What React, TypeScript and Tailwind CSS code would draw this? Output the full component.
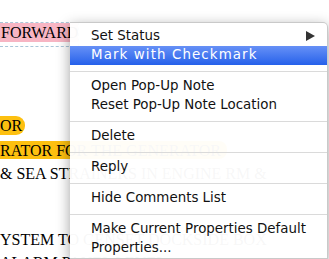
import type { ReactNode } from "react";

type MenuEntry = { label: string; arrow?: boolean; active?: boolean };

const menu: MenuEntry[][] = [
  [{ label: "Set Status", arrow: true }, { label: "Mark with Checkmark", active: true }],
  [{ label: "Open Pop-Up Note" }, { label: "Reset Pop-Up Note Location" }],
  [{ label: "Delete" }],
  [{ label: "Reply" }],
  [{ label: "Hide Comments List" }],
  [{ label: "Make Current Properties Default" }, { label: "Properties..." }],
];

function DocLine({ className, children }: { className: string; children: ReactNode }) {
  return <div className={`whitespace-nowrap text-[16px] leading-[19px] text-black ${className}`}>{children}</div>;
}

function MenuRow({ label, arrow, active }: MenuEntry) {
  return (
    <div
      className={`flex h-[19px] items-center justify-between pl-[21px] pr-[12px] ${
        active ? "bg-linear-to-b from-[#6690f6] to-[#2560ea] tracking-[1.1px] text-white" : "text-[#111]"
      }`}
    >
      <span>{label}</span>
      {arrow && (
        <svg width="9" height="10" viewBox="0 0 9 10" className="mt-[-1px]">
          <path d="M0 0 L9 5 L0 10 Z" fill="#333" />
        </svg>
      )}
    </div>
  );
}

export default function App() {
  return (
    <div className="relative h-[259px] w-[329px] overflow-hidden bg-white" style={{ fontFamily: "'Liberation Serif', serif" }}>
      {/* document underneath */}
      <div className="pt-[22px]">
        <div className="h-[25px] w-[79px] border border-dashed border-[#a9c6d8] border-l-0">
          <DocLine className="h-[19px] bg-[#f7b5c3] pl-[1px]">FORWARD</DocLine>
        </div>
        <DocLine className="mt-[69px]">
          <span className="inline-block h-[19px] rounded-r-[9px] bg-[#fdc010] pr-[3px]">OR</span>
        </DocLine>
        <DocLine className="mt-[6px]">
          <span className="inline-block h-[18px] rounded-r-[8px] bg-[#fdc010] pr-[6px]">RATOR FOR THE GENERATOR</span>
        </DocLine>
        <DocLine className="mt-[4px]">&amp; SEA STRAINERS IN ENGINE RM &amp;</DocLine>
        <DocLine className="mt-[47px]">YSTEM TO GENSET DOCKSIDE BOX</DocLine>
        <DocLine className="mt-[4px]">ALARM PANEL LEVEL</DocLine>
      </div>

      {/* context menu */}
      <div
        className="absolute left-[70px] top-[22px] w-[258px] rounded-tr-[5px] border border-l-0 border-[#c9c9c9] bg-white/[0.97] pt-[4px] text-[13.4px] shadow-[0_4px_14px_rgba(0,0,0,0.38)]"
        style={{ fontFamily: "'DejaVu Sans', sans-serif" }}
      >
        {menu.map((group, gi) => (
          <div key={gi}>
            {gi > 0 && (
              <div className="flex h-[12px] items-center">
                <div className="h-px w-full bg-[#dadada]" />
              </div>
            )}
            {group.map((item) => (
              <MenuRow key={item.label} {...item} />
            ))}
          </div>
        ))}
      </div>
    </div>
  );
}
